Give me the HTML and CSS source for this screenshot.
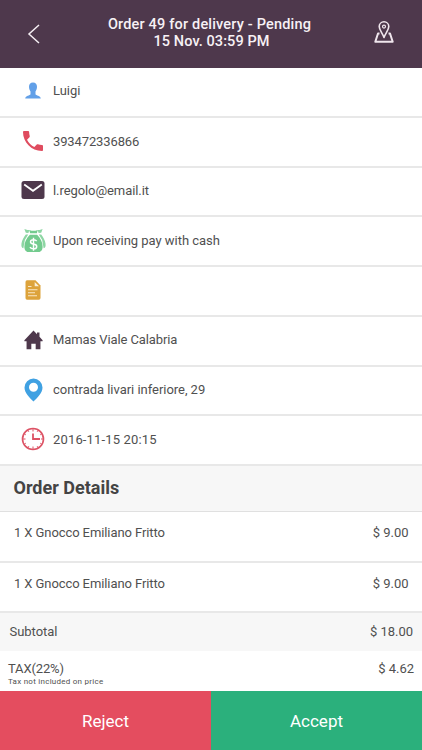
FILE: index.html
```html
<!DOCTYPE html>
<html lang="en">
<head>
    <meta charset="UTF-8">
    <meta name="viewport" content="width=device-width, initial-scale=1.0">
    <title>Order 49</title>
    <link rel="stylesheet" href="styles.css">
</head>
<body>

    <div class="screen">
        <header class="header">
            <svg class="back" width="14" height="22" viewBox="0 0 14 22"><path d="M12 2L2 11l10 9" fill="none" stroke="#f5eef3" stroke-width="1.5"/></svg>
            <h1><span class="title">Order 49 for delivery - Pending</span><br><span class="date">15 Nov. 03:59 PM</span></h1>
            <svg class="map" width="20" height="22" viewBox="0 0 20 22" fill="none" stroke="#f0e6ed" stroke-width="1.6" stroke-linejoin="round">
                <path d="M10 16.500C8.800 12.500 5.200 9 5.200 5.600a4.800 4.800 0 0 1 9.600 0C14.800 9 11.200 12.500 10 16.500z"/>
                <circle cx="10" cy="5.600" r="1.500" stroke-width="1.200"/>
                <path d="M5.500 12.500H4L1.300 20.700h17.400L16 12.500h-1.500" stroke-width="2"/>
            </svg>
        </header>

        <ul class="info">
            <li>
                <span class="icon"><svg width="16" height="17" viewBox="0 0 16 17"><path d="M8 .5c2.700 0 4 1.700 4 4.300 0 2-.8 3.500-1.500 4.700v2.800c.5 1.300 5 1.300 5.300 4.200H.2c.3-2.900 4.800-2.900 5.300-4.200V9.500C4.800 8.300 4 6.800 4 4.800 4 2.200 5.300.5 8 .5z" fill="#62a0e8"/></svg></span>
                <span>Luigi</span>
            </li>
            <li class="low">
                <span class="icon"><svg width="20" height="20" viewBox="3 3 18 18"><path d="M6.620 10.790c1.440 2.830 3.760 5.140 6.590 6.590l2.200-2.200c.27-.27.67-.36 1.020-.24 1.120.37 2.330.57 3.570.57.550 0 1 .45 1 1V20c0 .55-.45 1-1 1C10.610 21 3 13.390 3 4c0-.55.45-1 1-1h3.500c.55 0 1 .45 1 1 0 1.250.2 2.450.57 3.570.11.35.03.74-.25 1.020l-2.200 2.200z" fill="#df4c5f"/></svg></span>
                <span class="phone">393472336866</span>
            </li>
            <li>
                <span class="icon"><svg width="24" height="18" viewBox="0 0 24 18"><rect x=".5" width="23" height="18" rx="2.500" fill="#4e384c"/><path d="M3.200 3.500L12 9.800l8.800-6.300" fill="none" stroke="#fff" stroke-width="1.800"/></svg></span>
                <span class="mail">l.regolo@email.it</span>
            </li>
            <li>
                <span class="icon"><svg width="25" height="25" viewBox="0 0 26 25">
                    <path d="M3.500.5l3.200 1h2l-1 3.300L5 4.500zM22.500.5l-3.200 1h-2l1 3.300 2.700-.3zM5 6.200h2.500L4 12l-1.500 8.500C.5 20 .2 18.500.5 15.500 1 12 3 9 5 6.200zM21 6.200h-2.500L22 12l1.500 8.500c2-.5 2.300-2 2-5-.5-3.500-2.500-6.500-4.500-9.300z" fill="#8dd6a3"/>
                    <path d="M8.500 1.500l2.500.8h4l2.500-.8L16.500 5h-7zM9.200 6.500h7.600C20.500 10 22.500 14.500 22.500 19c0 3-1.500 5.500-4 5.500h-11c-2.500 0-4-2.500-4-5.500C3.500 14.500 5.500 10 9.200 6.500z" fill="#73cb8e"/>
                    <path d="M16.300 13.200c-.6-1-1.800-1.500-3.300-1.500-4 0-4.300 4 0 4.500 4.600.6 4.300 5 0 5-1.700 0-3-.6-3.700-1.800M13 9.700v13.500" fill="none" stroke="#fff" stroke-width="1.500"/>
                </svg></span>
                <span class="payment">Upon receiving pay with cash</span>
            </li>
            <li>
                <span class="icon"><svg width="16" height="20" viewBox="0 0 16 20"><path d="M2 .3h8.500l5 5.200V18q0 1.700-1.700 1.700H2Q.5 19.700.5 18V2Q.5.300 2 .3z" fill="#dda33b"/><path d="M9.700 1.900v4.300H14z" fill="#fbf0da"/><path d="M3 6.500h3.500M3 9.800h9.500M3 12.800h7M3 15.800h9" stroke="#f9e8c7" stroke-width="1.100"/></svg></span>
                <span></span>
            </li>
            <li>
                <span class="icon"><svg width="19" height="20" viewBox="0 0 20 20" preserveAspectRatio="none"><path d="M10 .5l3.700 3.700V2.500h2.600v4.300l3.300 3.500v.9h-2.300v8h-5v-5.500H7.700v5.500h-5v-8H.4v-.9z" fill="#4e384c"/></svg></span>
                <span class="shop">Mamas Viale Calabria</span>
            </li>
            <li class="low">
                <span class="icon pin"><svg width="19" height="24" viewBox="0 0 19 24"><path fill-rule="evenodd" d="M9.500.5a9 9 0 0 1 9 9c0 5.500-5 10-9 14-4-4-9-8.500-9-14a9 9 0 0 1 9-9zm0 4.300a4.500 4.500 0 1 0 0 9 4.500 4.500 0 0 0 0-9z" fill="#40a1e2"/></svg></span>
                <span class="address">contrada livari inferiore, 29</span>
            </li>
            <li>
                <span class="icon"><svg width="24" height="24" viewBox="0 0 24 24" fill="none" stroke="#dd5365"><circle cx="12" cy="12" r="10.500" stroke-width="1.600"/><path d="M12 6.500V12h7" stroke-width="1.800"/><path d="M12 2v2.500M12 19.500V22M2 12h2.500M20 12h2M7 3.300l.8 1.500M17 3.300l-.8 1.500M7 20.700l.8-1.500M17 20.700l-.8-1.500M3.300 7l1.500.8M20.700 7l-1.500.8M3.300 17l1.500-.8M20.700 17l-1.500-.8" stroke-width="1"/></svg></span>
                <span class="time">2016-11-15 20:15</span>
            </li>
        </ul>

        <h2>Order Details</h2>

        <div class="item"><span class="name">1 X Gnocco Emiliano Fritto</span><span class="price">$ 9.00</span></div>
        <div class="item"><span class="name">1 X Gnocco Emiliano Fritto</span><span class="price">$ 9.00</span></div>
        <div class="subtotal"><span>Subtotal</span><span class="price">$ 18.00</span></div>
        <div class="tax">
            <div>
                <div class="tax-name">TAX(22%)</div>
                <small>Tax not included on price</small>
            </div>
            <span class="price">$ 4.62</span>
        </div>

        <div class="actions">
            <button class="reject">Reject</button>
            <button class="accept">Accept</button>
        </div>
    </div>

</body>
</html>
```
FILE: styles.css
```css
* {
    box-sizing: border-box;
}
body {
    margin: 0;
    font-family: Roboto, sans-serif;
    font-size: 13px;
    letter-spacing: -0.03px;
    color: #505050;
    background-color: #fff;
}
svg {
    display: block;
}
.screen {
    display: flex;
    flex-direction: column;
    height: 750px;
    overflow: hidden;
}
.header {
    flex: none;
    display: flex;
    justify-content: space-between;
    align-items: center;
    height: 68px;
    padding: 0 28px 3px 27px;
    color: #f7f1f5;
    background-color: #4e384c;
}
.header .back {
    margin-top: 2px;
}
.header .map {
    margin-bottom: 2px;
}
.header h1 {
    margin: 0;
    padding-left: 4px;
    font-size: 14.5px;
    font-weight: 500;
    line-height: 17px;
    letter-spacing: 0.18px;
    text-align: center;
}
.header .date {
    padding-left: 4px;
    letter-spacing: 0.08px;
}
.info {
    flex: none;
    display: grid;
    grid-template-rows: repeat(8, 1fr);
    height: 398px;
    margin: 0;
    padding: 0;
    list-style: none;
}
.info li {
    display: flex;
    align-items: center;
    padding: 0 0 2px 20px;
    border-bottom: 2px solid #e8e8e8;
}
.info .low {
    padding-bottom: 1px;
}
.icon {
    display: flex;
    justify-content: center;
    width: 26px;
    margin-right: 7px;
}
.pin {
    padding-left: 1px;
}
.phone {
    letter-spacing: -0.12px;
}
.mail {
    letter-spacing: -0.08px;
}
.shop {
    letter-spacing: -0.1px;
}
.time {
    letter-spacing: 0.16px;
}
h2 {
    flex: none;
    height: 46px;
    margin: 0;
    padding-left: 13.5px;
    border-bottom: 1px solid #e0e0e0;
    font-size: 18px;
    font-weight: 700;
    line-height: 44px;
    letter-spacing: 0;
    color: #444;
    background-color: #f7f7f7;
}
.item {
    flex: none;
    display: flex;
    justify-content: space-between;
    height: 50.5px;
    padding: 13px 13.5px 0 14px;
    border-bottom: 2px solid #e8e8e8;
}
.name {
    letter-spacing: -0.09px;
}
.subtotal {
    flex: none;
    display: flex;
    justify-content: space-between;
    align-items: center;
    height: 38px;
    padding: 0 9px 1px 9.5px;
    background-color: #f7f7f7;
}
.tax {
    display: flex;
    flex: 1;
    justify-content: space-between;
    padding: 10px 8px 0;
}
.tax-name {
    letter-spacing: -0.15px;
}
small {
    display: block;
    padding-top: 1px;
    font-size: 8px;
    line-height: 10px;
    letter-spacing: 0.26px;
}
.actions {
    flex: none;
    display: flex;
    height: 59px;
}
button {
    flex: 1;
    padding: 0;
    border: none;
    font-family: inherit;
    font-size: 17px;
    letter-spacing: 0;
    color: #fff;
    cursor: pointer;
}
.reject {
    background-color: #e44d5f;
}
.accept {
    background-color: #2bb07c;
}
```
